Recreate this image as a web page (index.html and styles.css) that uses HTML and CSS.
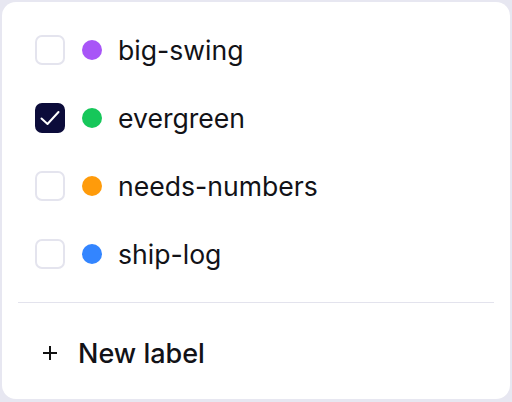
FILE: index.html
```html
<!DOCTYPE html>
<html lang="en">
<head>
  <meta charset="UTF-8" />
  <meta name="viewport" content="width=device-width, initial-scale=1.0" />
  <title>Labels</title>
  <link rel="stylesheet" href="styles.css">
</head>
<body>
  <div class="card">
    <!-- Label list -->
    <ul class="label-list">
      <li class="label-row">
        <span class="check"></span>
        <span class="dot dot-purple"></span>
        <span class="label-name">big-swing</span>
      </li>
      <li class="label-row">
        <span class="check checked">
          <svg width="30" height="30" viewBox="0 0 30 30" fill="none">
            <path d="M6.5 15.5 L12.5 21 L23.5 9" stroke="#fff" stroke-width="2" stroke-linecap="round" stroke-linejoin="round"/>
          </svg>
        </span>
        <span class="dot dot-green"></span>
        <span class="label-name">evergreen</span>
      </li>
      <li class="label-row">
        <span class="check"></span>
        <span class="dot dot-orange"></span>
        <span class="label-name">needs-numbers</span>
      </li>
      <li class="label-row">
        <span class="check"></span>
        <span class="dot dot-blue"></span>
        <span class="label-name">ship-log</span>
      </li>
    </ul>

    <div class="divider"></div>

    <!-- Add new label -->
    <div class="new-label">
      <svg class="plus" width="16" height="16" viewBox="0 0 16 16" fill="none">
        <path d="M8 1 V15 M1 8 H15" stroke="#111" stroke-width="2"/>
      </svg>
      <span>New label</span>
    </div>
  </div>
</body>
</html>
```

FILE: styles.css
```css
/* ------------------ Global Styles ------------------ */
body {
  margin: 0;
  padding: 2px;
  background-color: #e7e7f1;
  font-family: Inter, "Noto Sans", sans-serif;
  color: #121217;
}
.card {
  background: #fff;
  border-radius: 14px;
  padding: 14px 16px 0;
  height: 397px;
  box-sizing: border-box;
  width: 508px;
}
.label-list {
  list-style: none;
  margin: 0;
  padding: 0;
}
.label-row {
  display: flex;
  align-items: center;
  height: 68px;
  padding-left: 17px;
}
.check {
  width: 30px;
  height: 30px;
  box-sizing: border-box;
  border: 2px solid #e4e4ee;
  border-radius: 7px;
  display: flex;
  align-items: center;
  justify-content: center;
  position: relative;
}
.check.checked {
  background-color: #0c0c3a;
  border-color: #0c0c3a;
}
.check svg {
  position: absolute;
  left: -2px;
  top: -2px;
}
.dot {
  width: 20px;
  height: 20px;
  border-radius: 50%;
  margin-left: 17px;
}
.dot-purple { background-color: #a855f7; }
.dot-green { background-color: #16c75a; }
.dot-orange { background-color: #ff9b0a; }
.dot-blue { background-color: #3385ff; }
.label-name {
  margin-left: 16px;
  font-size: 26.6px;
}
.divider {
  height: 1px;
  background-color: #e3e3ed;
  margin-top: 14px;
}
.new-label {
  display: flex;
  align-items: center;
  height: 100px;
  padding-left: 24px;
  font-size: 27px;
  font-weight: 500;
}
.plus {
  margin-right: 20px;
}
```
